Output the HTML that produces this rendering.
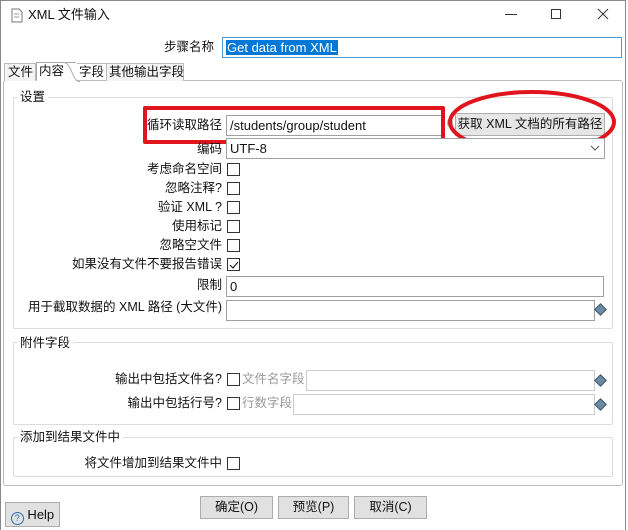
<!DOCTYPE html>
<html><head><meta charset="utf-8"><style>
*{box-sizing:border-box;margin:0;padding:0}
body{width:628px;height:530px;background:#fff;font-family:"Liberation Sans","Microsoft YaHei","Noto Sans CJK SC",sans-serif;font-size:12.5px;color:#111;position:relative;overflow:hidden}
.a{position:absolute;white-space:nowrap}
.lbl{position:absolute;text-align:right;white-space:nowrap;line-height:18px}
.in{position:absolute;border:1px solid #a0a0a0;background:#fff;height:21px;line-height:19px;padding-left:3px;font-size:13px}
.cb{position:absolute;width:13px;height:13px;border:1px solid #333;background:#fff}
.grp{position:absolute;border:1px solid #dcdcdc;border-radius:2px}
.leg{position:absolute;background:#fff;padding:0 3px;line-height:14px}
.btn{position:absolute;border:1px solid #adadad;background:#e1e1e1;text-align:center;line-height:21px;height:23px}
.dl{position:absolute;width:9px;height:9px;background:#6a8aa8;transform:rotate(45deg);border:1px solid #456}
</style></head><body>
<div class="a" style="left:0;top:0;width:626px;height:530px;border:1px solid #888;border-bottom:none"></div>
<svg class="a" style="left:10px;top:8px" width="14" height="16"><path d="M2 1h7l3 3v10H2z" fill="#fff" stroke="#777"/><path d="M4 6h5M4 9h5" stroke="#8a8"/></svg>
<div class="a" style="left:28px;top:6px;font-size:13px;line-height:18px">XML 文件输入</div>
<div class="a" style="left:505px;top:14px;width:12px;height:1px;background:#333"></div>
<div class="a" style="left:551px;top:9px;width:10px;height:10px;border:1px solid #333"></div>
<svg class="a" style="left:597px;top:8px" width="12" height="12"><path d="M1 1L11 11M11 1L1 11" stroke="#333"/></svg>

<div class="lbl" style="right:414px;top:38px">步骤名称</div>
<div class="in" style="left:222px;top:37px;width:400px;border-color:#4a9ad8"><span style="background:#0078d7;color:#fff;padding:0 1px">Get data from XML</span></div>

<div class="a" style="left:3px;top:80px;width:620px;height:406px;border:1px solid #bbb;border-radius:3px"></div>
<div class="a" style="left:4px;top:63px;width:32px;height:18px;border:1px solid #bbb;border-bottom:none;background:#f4f4f4;line-height:16px;padding-left:3px">文件</div>
<div class="a" style="left:36px;top:62px;width:40px;height:19px;border:1px solid #aaa;border-bottom:1px solid #fff;border-right:none;background:#fff;line-height:16px;padding-left:2px">内容</div>
<svg class="a" style="left:60px;top:62px" width="20" height="20"><path d="M0 0.5h4q4 0 8 10t8 9" fill="none" stroke="#aaa"/></svg>
<div class="a" style="left:77px;top:63px;width:30px;height:18px;border:1px solid #bbb;border-bottom:none;border-left:none;line-height:16px;padding-left:2px">字段</div>
<div class="a" style="left:106px;top:63px;width:78px;height:18px;border:1px solid #bbb;border-bottom:none;background:#f4f4f4;line-height:16px;padding-left:2px">其他输出字段</div>

<div class="grp" style="left:13px;top:97px;width:600px;height:232px"></div>
<div class="leg" style="left:17px;top:90px">设置</div>

<div class="lbl" style="right:406px;top:116px">循环读取路径</div>
<div class="in" style="left:226px;top:115px;width:218px">/students/group/student</div>
<div class="a" style="left:143px;top:106px;width:302px;height:38px;border:4px solid #e0141c;border-radius:2px"></div>
<div class="a" style="left:447px;top:119px;width:6px;height:8px;background:#bbb;border-radius:3px"></div>
<div class="btn" style="left:455px;top:113px;width:150px;background:#e6e6e6">获取 XML 文档的所有路径</div>
<svg class="a" style="left:446px;top:88px" width="172" height="68"><ellipse cx="86" cy="34" rx="82" ry="30" fill="none" stroke="#e0141c" stroke-width="4"/></svg>

<div class="lbl" style="right:406px;top:140px">编码</div>
<div class="in" style="left:226px;top:138px;width:379px">UTF-8</div>
<svg class="a" style="left:590px;top:145px" width="10" height="7"><path d="M1 1l4 4 4-4" fill="none" stroke="#555"/></svg>

<div class="lbl" style="right:406px;top:160px">考虑命名空间</div><div class="cb" style="left:227px;top:163px"></div>
<div class="lbl" style="right:406px;top:179px">忽略注释?</div><div class="cb" style="left:227px;top:182px"></div>
<div class="lbl" style="right:406px;top:198px">验证 XML ?</div><div class="cb" style="left:227px;top:201px"></div>
<div class="lbl" style="right:406px;top:217px">使用标记</div><div class="cb" style="left:227px;top:220px"></div>
<div class="lbl" style="right:406px;top:236px">忽略空文件</div><div class="cb" style="left:227px;top:239px"></div>
<div class="lbl" style="right:406px;top:255px">如果没有文件不要报告错误</div><div class="cb" style="left:227px;top:258px"></div>
<svg class="a" style="left:228px;top:259px" width="12" height="12"><path d="M2 6l3 3 5-6" fill="none" stroke="#222" stroke-width="1.2"/></svg>

<div class="lbl" style="right:406px;top:276px">限制</div>
<div class="in" style="left:226px;top:276px;width:378px">0</div>
<div class="lbl" style="right:406px;top:298px">用于截取数据的 XML 路径 (大文件)</div>
<div class="in" style="left:226px;top:300px;width:369px"></div>
<div class="dl" style="left:596px;top:305px"></div>

<div class="grp" style="left:13px;top:342px;width:600px;height:83px"></div>
<div class="leg" style="left:17px;top:336px">附件字段</div>
<div class="lbl" style="right:406px;top:370px">输出中包括文件名?</div><div class="cb" style="left:227px;top:373px"></div>
<div class="a" style="left:242px;top:370px;color:#999;line-height:18px">文件名字段</div>
<div class="in" style="left:306px;top:370px;width:289px;border-color:#ccc"></div>
<div class="dl" style="left:596px;top:376px"></div>
<div class="lbl" style="right:406px;top:394px">输出中包括行号?</div><div class="cb" style="left:227px;top:397px"></div>
<div class="a" style="left:242px;top:394px;color:#999;line-height:18px">行数字段</div>
<div class="in" style="left:293px;top:394px;width:302px;border-color:#ccc"></div>
<div class="dl" style="left:596px;top:400px"></div>

<div class="grp" style="left:13px;top:437px;width:600px;height:40px"></div>
<div class="leg" style="left:17px;top:430px">添加到结果文件中</div>
<div class="lbl" style="right:406px;top:454px">将文件增加到结果文件中</div><div class="cb" style="left:227px;top:457px"></div>

<div class="btn" style="left:200px;top:496px;width:73px">确定(O)</div>
<div class="btn" style="left:278px;top:496px;width:71px">预览(P)</div>
<div class="btn" style="left:354px;top:496px;width:73px">取消(C)</div>
<div class="btn" style="left:5px;top:502px;width:55px;height:25px;line-height:23px;font-size:13px"><span style="display:inline-block;width:13px;height:13px;border:1px solid #2a6db0;border-radius:50%;font-size:9px;line-height:11px;color:#2a6db0;vertical-align:-2px">?</span> Help</div>
</body></html>
